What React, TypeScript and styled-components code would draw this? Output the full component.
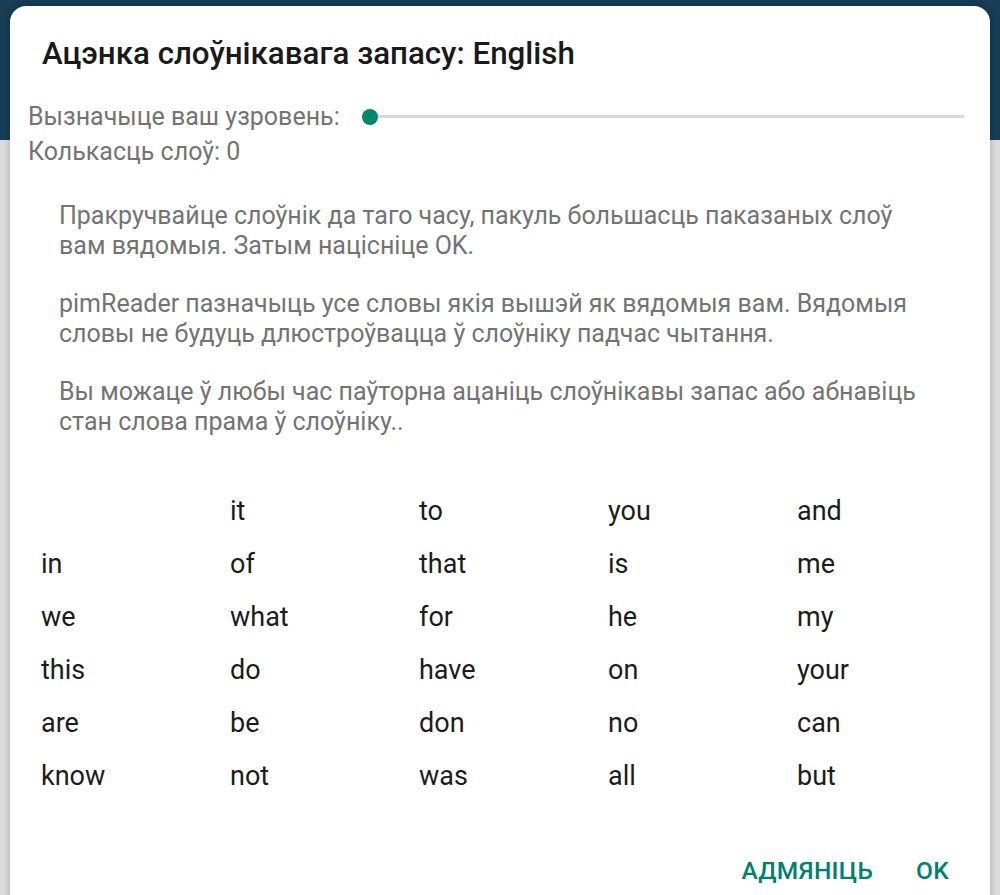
import React from "react";
import styled, { createGlobalStyle } from "styled-components";

const GlobalStyle = createGlobalStyle`
  html, body {
    margin: 0;
    padding: 0;
    height: 100%;
    overflow: hidden;
  }
  body {
    font-family: Roboto, "Noto Sans", sans-serif;
    background: #dadada;
  }
`;

const Screen = styled.div`
  height: 895px;
  padding: 6px 10px 0;
  box-sizing: border-box;
  background: linear-gradient(to bottom, #173c56 0, #173c56 140px, #dcdcdc 140px);
  overflow: hidden;
`;

const Dialog = styled.div`
  background: #fff;
  border-radius: 16px 16px 0 0;
  box-shadow: 0 0 6px rgba(0, 0, 0, 0.25);
  height: 920px;
  display: flex;
  flex-direction: column;
`;

const Title = styled.h1`
  margin: 0;
  padding: 29px 32px 0;
  font-size: 31.3px;
  font-weight: 500;
  color: #1a1a1a;
  line-height: 37px;
`;

const LevelRow = styled.div`
  display: flex;
  align-items: center;
  margin-top: 27px;
  padding: 0 26px 0 18px;
`;

const Label = styled.span`
  font-size: 25px;
  color: #737373;
  line-height: 35px;
  white-space: nowrap;
`;

const Slider = styled.div`
  flex: 1;
  margin-left: 22px;
  height: 24px;
  display: flex;
  align-items: center;
  position: relative;
`;

const Track = styled.div`
  flex: 1;
  height: 3px;
  background: #d8d8d8;
`;

const Thumb = styled.div`
  position: absolute;
  left: 0;
  top: 4px;
  width: 16px;
  height: 16px;
  border-radius: 50%;
  background: #00876f;
`;

const CountLabel = styled(Label)`
  display: block;
  padding-left: 18px;
`;

const Help = styled.div`
  padding: 32px 30px 0 49px;
`;

const Para = styled.p`
  margin: 0 0 29px;
  font-size: 25px;
  line-height: 29.5px;
  color: #737373;
  white-space: nowrap;
`;

const Words = styled.div`
  display: grid;
  grid-template-columns: repeat(5, 189px);
  padding: 20px 0 0 31px;
`;

const Word = styled.div`
  font-size: 27px;
  line-height: 53px;
  color: #1c1c1c;
`;

const Actions = styled.div`
  display: flex;
  justify-content: flex-end;
  align-items: center;
  gap: 43px;
  padding: 53px 41px 0;
`;

const ActionButton = styled.button`
  background: none;
  border: none;
  padding: 0;
  font-family: Roboto, "Noto Sans", sans-serif;
  font-size: 24.5px;
  font-weight: 500;
  color: #00806e;
  letter-spacing: 0.3px;
  cursor: pointer;
`;

const words = [
  "", "it", "to", "you", "and",
  "in", "of", "that", "is", "me",
  "we", "what", "for", "he", "my",
  "this", "do", "have", "on", "your",
  "are", "be", "don", "no", "can",
  "know", "not", "was", "all", "but",
];

const App = () => {
  return (
    <>
      <GlobalStyle />
      <Screen>
        <Dialog>
          <Title>Ацэнка слоўнікавага запасу: English</Title>
          <LevelRow>
            <Label>Вызначыце ваш узровень:</Label>
            <Slider>
              <Track />
              <Thumb />
            </Slider>
          </LevelRow>
          <CountLabel>Колькасць слоў: 0</CountLabel>
          <Help>
            <Para>
              Пракручвайце слоўнік да таго часу, пакуль большасць паказаных слоў
              <br />
              вам вядомыя. Затым націсніце OK.
            </Para>
            <Para>
              pimReader пазначыць усе словы якія вышэй як вядомыя вам. Вядомыя
              <br />
              словы не будуць длюстроўвацца ў слоўніку падчас чытання.
            </Para>
            <Para>
              Вы можаце ў любы час паўторна ацаніць слоўнікавы запас або абнавіць
              <br />
              стан слова прама ў слоўніку..
            </Para>
          </Help>
          <Words>
            {words.map((w, i) => (
              <Word key={i}>{w}</Word>
            ))}
          </Words>
          <Actions>
            <ActionButton>АДМЯНІЦЬ</ActionButton>
            <ActionButton>OK</ActionButton>
          </Actions>
        </Dialog>
      </Screen>
    </>
  );
};

export default App;
